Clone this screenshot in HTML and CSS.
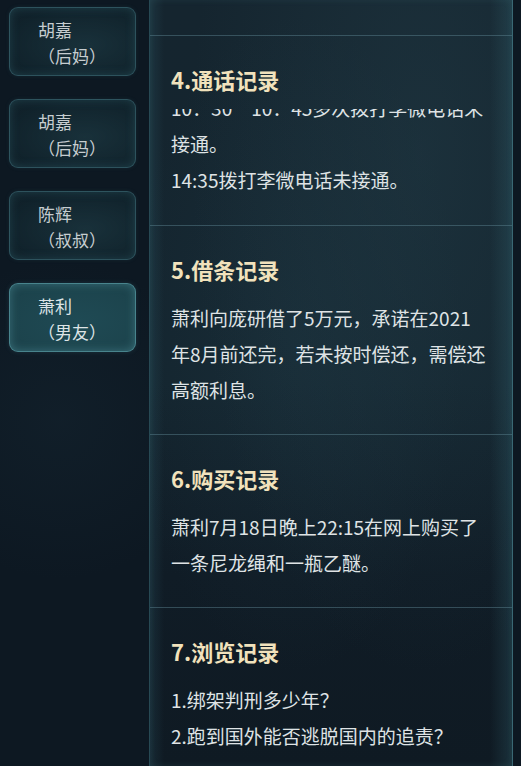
FILE: index.html
```html
<!DOCTYPE html>
<html lang="zh">
<head>
<meta charset="utf-8">
<title>线索</title>
<link rel="stylesheet" href="styles.css">
</head>
<body>
<div class="layout">
  <nav class="sidebar">
    <div class="person"><span class="name">胡嘉</span><span class="role">（后妈）</span></div>
    <div class="person"><span class="name">胡嘉</span><span class="role">（后妈）</span></div>
    <div class="person"><span class="name">陈辉</span><span class="role">（叔叔）</span></div>
    <div class="person active"><span class="name">萧利</span><span class="role">（男友）</span></div>
  </nav>
  <main class="panel">
    <div class="section-tail"></div>
    <section class="record">
      <h2 class="record-title">4.通话记录</h2>
      <div class="record-scroll">
        <p class="record-text shifted">10：30—10：45多次拨打李微电话未<br>接通。<br>14:35拨打李微电话未接通。</p>
      </div>
    </section>
    <section class="record">
      <h2 class="record-title">5.借条记录</h2>
      <p class="record-text">萧利向庞研借了5万元，承诺在2021<br>年8月前还完，若未按时偿还，需偿还<br>高额利息。</p>
    </section>
    <section class="record">
      <h2 class="record-title">6.购买记录</h2>
      <p class="record-text">萧利7月18日晚上22:15在网上购买了<br>一条尼龙绳和一瓶乙醚。</p>
    </section>
    <section class="record">
      <h2 class="record-title">7.浏览记录</h2>
      <p class="record-text">1.绑架判刑多少年？<br>2.跑到国外能否逃脱国内的追责？</p>
    </section>
  </main>
</div>
</body>
</html>
```
FILE: styles.css
```css
* { box-sizing: border-box; }

html, body {
  margin: 0;
  padding: 0;
  width: 521px;
  height: 766px;
  overflow: hidden;
  background: #0d1822;
  font-family: "Noto Sans CJK SC", "Noto Sans", sans-serif;
}

.layout {
  display: flex;
  height: 766px;
  background:
    radial-gradient(circle at 60px 420px, rgba(40,70,85,0.14), transparent 160px),
    #0d1822;
}

.sidebar {
  width: 149px;
  flex: none;
  padding: 7px 0 0 9px;
  display: flex;
  flex-direction: column;
  gap: 23px;
}

.person {
  width: 127px;
  height: 69px;
  padding: 9px 0 0 28px;
  border-radius: 9px;
  border: 1px solid rgba(86, 150, 162, 0.42);
  background:
    radial-gradient(ellipse at 60% 55%, rgba(30, 60, 70, 0.55), rgba(16, 34, 43, 0.9) 75%),
    #12232c;
  box-shadow: inset 0 0 10px rgba(70, 140, 152, 0.28), 0 0 4px rgba(60, 120, 130, 0.15);
  display: flex;
  flex-direction: column;
  color: #c6cdd0;
  font-size: 17px;
  line-height: 26px;
}

.person.active {
  border-color: rgba(110, 185, 195, 0.55);
  background:
    radial-gradient(ellipse at 55% 55%, #1f4a54, #1c434c 80%),
    #1d4650;
  box-shadow: inset 0 0 10px rgba(110, 190, 200, 0.35), 0 0 5px rgba(80, 150, 160, 0.2);
  color: #dde4e6;
}

.name, .role { display: block; white-space: nowrap; }

.panel {
  width: 364px;
  flex: none;
  height: 766px;
  border-left: 1px solid #274954;
  border-right: 1px solid #3a6874;
  background:
    linear-gradient(90deg, rgba(55, 105, 118, 0.22), transparent 14px, transparent calc(100% - 22px), rgba(55, 110, 122, 0.28)),
    radial-gradient(ellipse at 75% 20%, rgba(40, 70, 82, 0.35), transparent 60%),
    radial-gradient(ellipse at 40% 45%, rgba(32, 58, 70, 0.35), transparent 55%),
    linear-gradient(180deg, #15252f 0%, #14252f 50%, #101c26 75%, #0f1a23 100%);
  box-shadow: inset 0 0 6px rgba(70, 130, 140, 0.18);
}

.section-tail { height: 35px; }

.record {
  border-top: 1px solid rgba(95, 135, 148, 0.45);
  padding: 28px 21px 26px 21px;
}

.record-title {
  margin: 0 0 16px 0;
  font-size: 22px;
  line-height: 30px;
  font-weight: 700;
  color: #f1e2bc;
  white-space: nowrap;
}

.record-text {
  margin: 0;
  font-size: 19px;
  line-height: 36px;
  color: #dfe3e5;
  white-space: nowrap;
}

.record-scroll {
  margin-top: -1px;
  height: 90px;
  overflow: hidden;
}

.record-text.shifted { margin-top: -19px; }
```
